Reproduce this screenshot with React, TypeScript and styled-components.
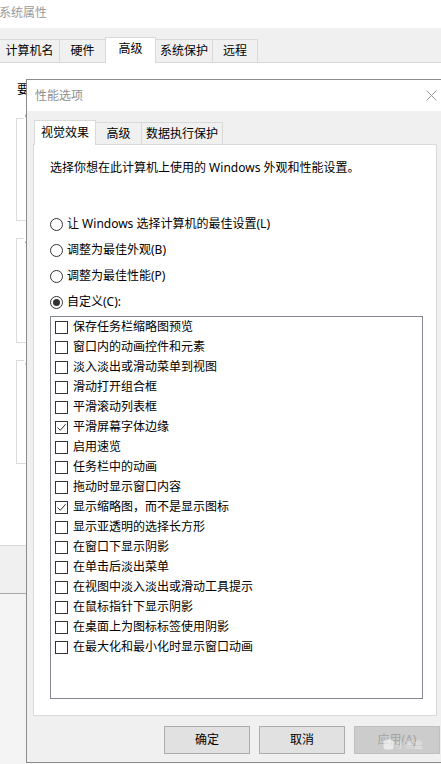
import React from 'react';
import styled, { createGlobalStyle } from 'styled-components';

const GlobalStyle = createGlobalStyle`
  html, body {
    margin: 0;
    padding: 0;
    overflow: hidden;
    background: #f3f3f3;
  }
  body {
    font-family: "Noto Sans", "Noto Sans CJK SC", sans-serif;
    font-size: 12px;
    color: #000;
  }
  * {
    box-sizing: border-box;
  }
`;

const bgTabs = [
  { label: '计算机名', width: 61 },
  { label: '硬件', width: 47 },
  { label: '高级', width: 51, active: true },
  { label: '系统保护', width: 58 },
  { label: '远程', width: 46 },
];

const groups = [
  { title: '性能', height: 103, gap: 20 },
  { title: '用户配置文件', height: 105, gap: 17 },
  { title: '启动和故障恢复', height: 104, gap: 17 },
];

const dialogTabs = [
  { label: '视觉效果', width: 62, active: true },
  { label: '高级', width: 47 },
  { label: '数据执行保护', width: 82 },
];

const radios = [
  { label: '让 Windows 选择计算机的最佳设置(L)' },
  { label: '调整为最佳外观(B)' },
  { label: '调整为最佳性能(P)' },
  { label: '自定义(C):', checked: true },
];

const effects = [
  { label: '保存任务栏缩略图预览' },
  { label: '窗口内的动画控件和元素' },
  { label: '淡入淡出或滑动菜单到视图' },
  { label: '滑动打开组合框' },
  { label: '平滑滚动列表框' },
  { label: '平滑屏幕字体边缘', checked: true },
  { label: '启用速览' },
  { label: '任务栏中的动画' },
  { label: '拖动时显示窗口内容' },
  { label: '显示缩略图，而不是显示图标', checked: true },
  { label: '显示亚透明的选择长方形' },
  { label: '在窗口下显示阴影' },
  { label: '在单击后淡出菜单' },
  { label: '在视图中淡入淡出或滑动工具提示' },
  { label: '在鼠标指针下显示阴影' },
  { label: '在桌面上为图标标签使用阴影' },
  { label: '在最大化和最小化时显示窗口动画' },
];

export default function App() {
  return (
    <Desktop>
      <GlobalStyle />
      <BgWindow>
        <BgTitle>系统属性</BgTitle>
        <BgTabRow>
          {bgTabs.map((tab) => (
            <BgTab key={tab.label} $width={tab.width} $active={!!tab.active}>
              {tab.label}
            </BgTab>
          ))}
        </BgTabRow>
        <BgPanel>
          {/* only the part left of the dialog is visible */}
          <BgNote>要进行大多数更改，你必须作为管理员登录。</BgNote>
          {groups.map((g) => (
            <GroupBox key={g.title} $height={g.height} $gap={g.gap}>
              <GroupTitle>{g.title}</GroupTitle>
            </GroupBox>
          ))}
        </BgPanel>
      </BgWindow>

      <Dialog>
        <DialogTitle>
          <span>性能选项</span>
          <CloseIcon width="11" height="11" viewBox="0 0 11 11">
            <path d="M0.5 0.5 L10.5 10.5 M10.5 0.5 L0.5 10.5" stroke="#9a9a9a" strokeWidth="1" fill="none" />
          </CloseIcon>
        </DialogTitle>
        <DialogBody>
          <TabRow>
            {dialogTabs.map((tab) => (
              <Tab key={tab.label} $width={tab.width} $active={!!tab.active}>
                {tab.label}
              </Tab>
            ))}
          </TabRow>
          <Panel>
            <Description>选择你想在此计算机上使用的 Windows 外观和性能设置。</Description>
            <RadioGroup>
              {radios.map((r) => (
                <RadioRow key={r.label}>
                  <RadioCircle $checked={!!r.checked} />
                  <span>{r.label}</span>
                </RadioRow>
              ))}
            </RadioGroup>
            <ListBox>
              {effects.map((item) => (
                <CheckRow key={item.label}>
                  <CheckBox>
                    {item.checked && (
                      <svg width="11" height="11" viewBox="0 0 11 11">
                        <path d="M1.5 5.5 L4.3 8.3 L9.6 2.2" stroke="#333" strokeWidth="1" fill="none" />
                      </svg>
                    )}
                  </CheckBox>
                  <span>{item.label}</span>
                </CheckRow>
              ))}
            </ListBox>
          </Panel>
          <ButtonRow>
            <Button>确定</Button>
            <Button>取消</Button>
            <Button disabled>应用(A)</Button>
          </ButtonRow>
        </DialogBody>
      </Dialog>

      <Watermark>
        <svg width="11" height="11" viewBox="0 0 11 11">
          <rect x="0.5" y="0.5" width="10" height="10" rx="3" fill="rgba(255,255,255,0.6)" />
        </svg>
        小黑盒
      </Watermark>
    </Desktop>
  );
}

const Desktop = styled.div`
  position: relative;
  width: 441px;
  height: 764px;
  overflow: hidden;
  background: #f4f4f4;
`;

const BgWindow = styled.div`
  height: 594px;
  display: flex;
  flex-direction: column;
  background: #f0f0f0;
  border-bottom: 1px solid #a8a8a8;
`;

const BgTitle = styled.div`
  height: 28px;
  display: flex;
  align-items: center;
  padding-bottom: 3px;
  margin-left: -1px;
  background: #fff;
  color: #9a9a9a;
  line-height: 16px;
`;

const BgTabRow = styled.div`
  height: 34px;
  display: flex;
  align-items: flex-end;
`;

const BgTab = styled.div<{ $width: number; $active: boolean }>`
  width: ${(p) => p.$width}px;
  height: ${(p) => (p.$active ? 26 : 23)}px;
  margin-bottom: ${(p) => (p.$active ? -1 : 0)}px;
  margin-left: -1px;
  position: relative;
  z-index: ${(p) => (p.$active ? 1 : 0)};
  display: flex;
  align-items: ${(p) => (p.$active ? 'flex-start' : 'center')};
  padding-top: ${(p) => (p.$active ? 3 : 0)}px;
  justify-content: center;
  background: ${(p) => (p.$active ? '#fff' : '#f0f0f0')};
  border: 1px solid #d9d9d9;
  border-bottom: none;
  line-height: 16px;
`;

const BgPanel = styled.div`
  height: 484px;
  display: flex;
  flex-direction: column;
  padding-top: 19px;
  background: #fff;
  border-top: 1px solid #d9d9d9;
  border-bottom: 1px solid #d9d9d9;
`;

const BgNote = styled.div`
  width: 9px;
  margin-left: 17px;
  overflow: hidden;
  line-height: 16px;
  white-space: nowrap;
`;

const GroupBox = styled.div<{ $height: number; $gap: number }>`
  position: relative;
  width: 300px;
  height: ${(p) => p.$height}px;
  margin: ${(p) => p.$gap}px 0 0 16px;
  border: 1px solid #dcdcdc;
`;

const GroupTitle = styled.span`
  position: absolute;
  top: -9px;
  left: 7px;
  width: 4px;
  overflow: hidden;
  padding: 0 1px;
  background: #fff;
  line-height: 16px;
  white-space: nowrap;
`;

const Dialog = styled.div`
  position: absolute;
  left: 26px;
  top: 79px;
  width: 420px;
  height: 684px;
  display: flex;
  flex-direction: column;
  border: 1px solid #8c8c8c;
  background: #f0f0f0;
`;

const DialogTitle = styled.div`
  height: 31px;
  display: flex;
  align-items: center;
  justify-content: space-between;
  padding: 0 8px;
  background: #fff;
  color: #8f8f8f;
  line-height: 16px;
`;

const CloseIcon = styled.svg`
  display: block;
  margin-top: -1px;
`;

const DialogBody = styled.div`
  flex: 1;
  display: flex;
  flex-direction: column;
  padding: 9px 8px 0 6px;
`;

const TabRow = styled.div`
  height: 24px;
  display: flex;
  align-items: flex-end;
  padding-left: 2px;
`;

const Tab = styled.div<{ $width: number; $active: boolean }>`
  width: ${(p) => p.$width}px;
  height: ${(p) => (p.$active ? 25 : 22)}px;
  margin-bottom: ${(p) => (p.$active ? -1 : 0)}px;
  margin-left: -1px;
  position: relative;
  z-index: ${(p) => (p.$active ? 2 : 0)};
  display: flex;
  align-items: center;
  justify-content: center;
  padding-bottom: ${(p) => (p.$active ? 1 : 0)}px;
  padding-top: ${(p) => (p.$active ? 0 : 1)}px;
  background: ${(p) => (p.$active ? '#fff' : '#f0f0f0')};
  border: 1px solid #d9d9d9;
  border-bottom: none;
  line-height: 16px;
`;

const Panel = styled.div`
  position: relative;
  z-index: 1;
  height: 572px;
  display: flex;
  flex-direction: column;
  padding: 15px 13px 0 16px;
  background: #fff;
  border: 1px solid #d9d9d9;
`;

const Description = styled.div`
  line-height: 16px;
  white-space: nowrap;
`;

const RadioGroup = styled.div`
  display: flex;
  flex-direction: column;
  margin-top: 35px;
`;

const RadioRow = styled.div`
  height: 26px;
  display: flex;
  align-items: center;
  gap: 4px;
  line-height: 16px;
`;

const RadioCircle = styled.span<{ $checked: boolean }>`
  width: 13px;
  height: 13px;
  flex: none;
  display: flex;
  align-items: center;
  justify-content: center;
  border: 1px solid #333;
  border-radius: 50%;
  background: #fff;
  &::after {
    content: '';
    display: ${(p) => (p.$checked ? 'block' : 'none')};
    width: 7px;
    height: 7px;
    border-radius: 50%;
    background: #333;
  }
`;

const ListBox = styled.div`
  width: 373px;
  height: 383px;
  margin-top: 1px;
  display: flex;
  flex-direction: column;
  padding-left: 4px;
  background: #fff;
  border: 1px solid #828790;
`;

const CheckRow = styled.div`
  height: 20px;
  flex: none;
  display: flex;
  align-items: center;
  gap: 5px;
  line-height: 14px;
  white-space: nowrap;
`;

const CheckBox = styled.span`
  width: 13px;
  height: 13px;
  flex: none;
  display: flex;
  align-items: center;
  justify-content: center;
  border: 1px solid #333;
  background: #fff;
  svg {
    display: block;
  }
`;

const ButtonRow = styled.div`
  display: flex;
  justify-content: flex-end;
  gap: 9px;
  margin: 10px -3px 0 0;
`;

const Button = styled.button`
  width: 86px;
  height: 28px;
  padding: 0;
  font-family: inherit;
  font-size: 12px;
  line-height: 16px;
  color: #000;
  background: #e1e1e1;
  border: 1px solid #adadad;
  border-radius: 0;
  &:disabled {
    color: #a3a3a3;
    background: #cccccc;
    border-color: #bfbfbf;
  }
`;

const Watermark = styled.div`
  position: absolute;
  left: 383px;
  top: 739px;
  display: flex;
  align-items: center;
  gap: 2px;
  font-size: 9px;
  line-height: 11px;
  color: rgba(255, 255, 255, 0.55);
  pointer-events: none;
`;
